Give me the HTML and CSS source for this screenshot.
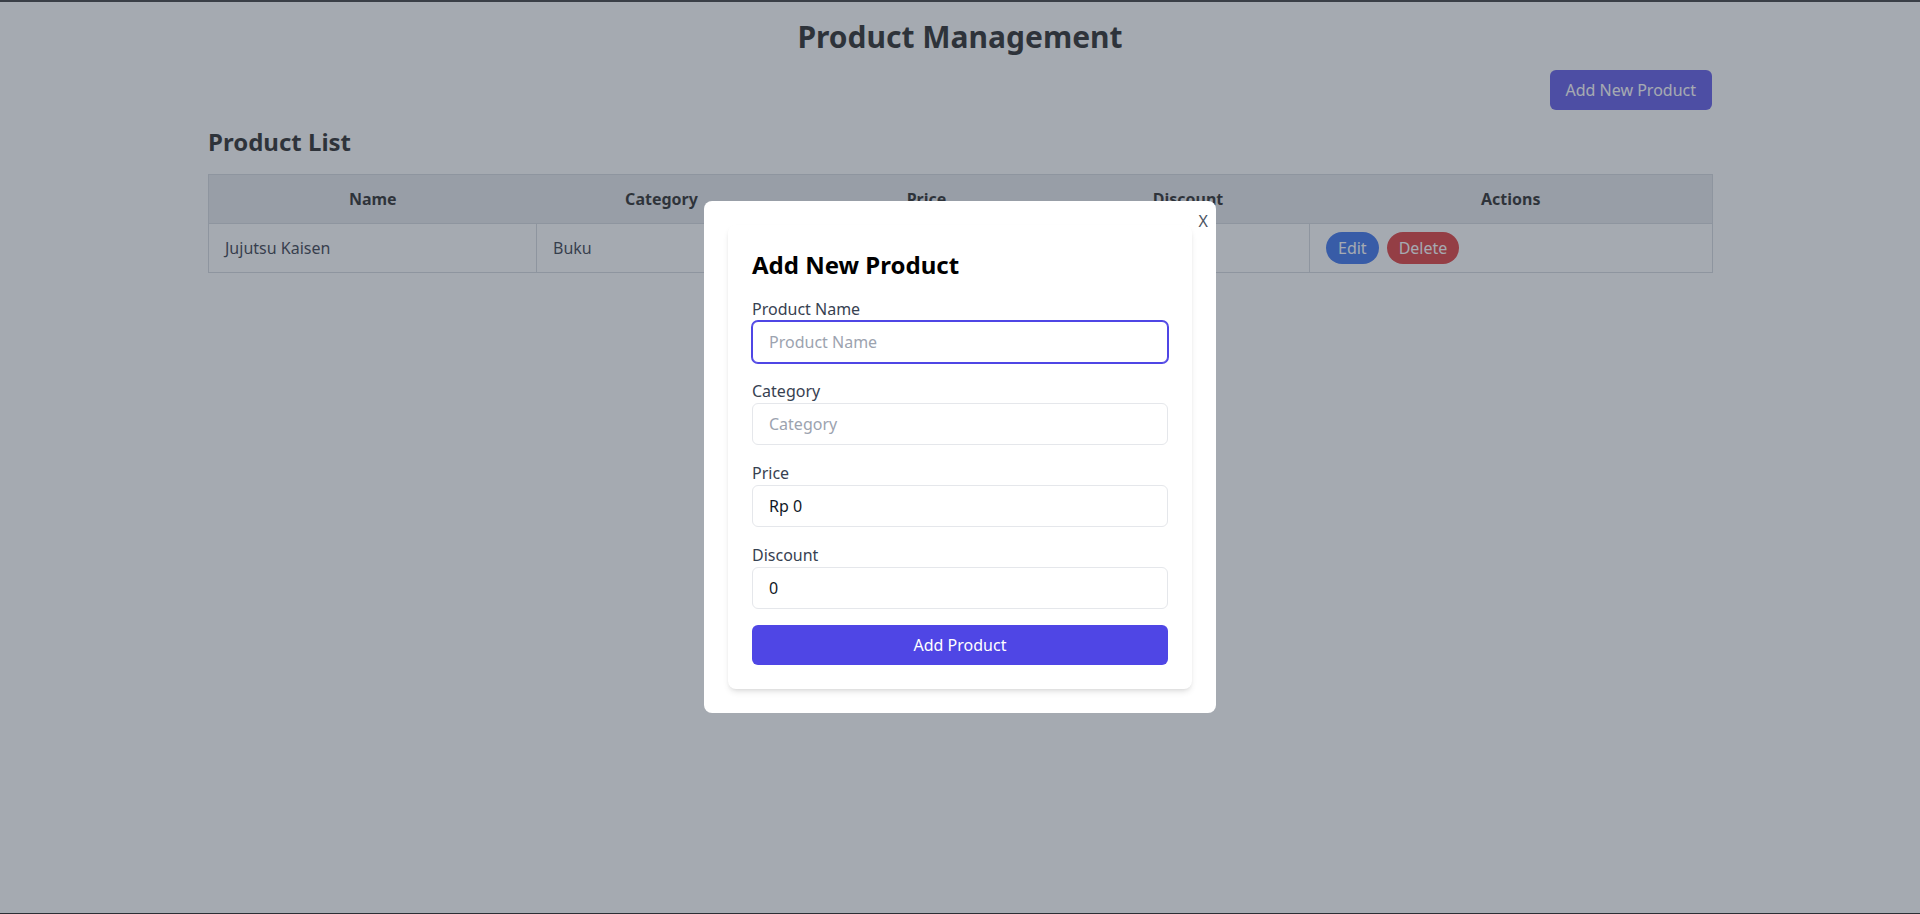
FILE: index.html
```html
<!DOCTYPE html>
<html lang="en">
<head>
<meta charset="utf-8">
<title>Product Management</title>
<link rel="stylesheet" href="styles.css">
</head>
<body>
<div class="container">
  <h1 class="page-title">Product Management</h1>
  <div class="toolbar">
    <button class="btn-primary" type="button">Add New Product</button>
  </div>
  <h2 class="section-title">Product List</h2>
  <table class="product-table">
    <colgroup>
      <col class="col-name">
      <col class="col-category">
      <col class="col-price">
      <col class="col-discount">
      <col class="col-actions">
    </colgroup>
    <thead>
      <tr>
        <th>Name</th>
        <th>Category</th>
        <th>Price</th>
        <th>Discount</th>
        <th>Actions</th>
      </tr>
    </thead>
    <tbody>
      <tr>
        <td>Jujutsu Kaisen</td>
        <td>Buku</td>
        <td>Rp 50.000</td>
        <td>10%</td>
        <td>
          <div class="actions">
            <button class="pill pill-edit" type="button">Edit</button>
            <button class="pill pill-delete" type="button">Delete</button>
          </div>
        </td>
      </tr>
    </tbody>
  </table>
</div>

<div class="overlay">
  <div class="modal">
    <button class="close" type="button">X</button>
    <div class="card">
      <h2 class="card-title">Add New Product</h2>
      <form class="form">
        <div class="field">
          <label class="label" for="name">Product Name</label>
          <input class="input input-focus" id="name" type="text" placeholder="Product Name">
        </div>
        <div class="field">
          <label class="label" for="category">Category</label>
          <input class="input" id="category" type="text" placeholder="Category">
        </div>
        <div class="field">
          <label class="label" for="price">Price</label>
          <input class="input" id="price" type="text" value="Rp 0">
        </div>
        <div class="field">
          <label class="label" for="discount">Discount</label>
          <input class="input" id="discount" type="text" value="0">
        </div>
        <button class="submit" type="button">Add Product</button>
      </form>
    </div>
  </div>
</div>
</body>
</html>
```
FILE: styles.css
```css
* { box-sizing: border-box; }

html, body { height: 100%; }

body {
  margin: 0;
  background: #ffffff;
  color: #1f2937;
  font-family: "Noto Sans", "Open Sans", sans-serif;
  font-size: 16px;
  line-height: 24px;
  border-top: 2px solid #29282a;
}

.container {
  max-width: 1536px;
  margin: 0 auto;
  padding: 16px 16px 0;
}

.page-title {
  margin: 0 0 16px;
  padding-top: 1px;
  height: 36px;
  font-size: 30px;
  line-height: 36px;
  font-weight: 700;
  text-align: center;
  color: #111111;
}

.toolbar {
  display: flex;
  justify-content: flex-end;
  margin-bottom: 16px;
}

.btn-primary {
  font: inherit;
  border: none;
  background: #4f46e5;
  color: #ffffff;
  padding: 8px 16px;
  border-radius: 6px;
  line-height: 24px;
}

.section-title {
  margin: 0 0 16px;
  font-size: 24px;
  line-height: 32px;
  font-weight: 700;
  color: #111111;
}

.product-table {
  width: 100%;
  table-layout: fixed;
  border-collapse: collapse;
  border: 1px solid #d1d5db;
}

.col-name { width: 328px; }
.col-category { width: 250px; }
.col-price { width: 280px; }
.col-discount { width: 243px; }
.col-actions { width: 403px; }

.product-table th {
  background: #e5e7eb;
  border: none;
  border-bottom: 1px solid #d1d5db;
  padding: 12px 16px;
  font-weight: 700;
  text-align: center;
  color: #111111;
}

.product-table td {
  border: 1px solid #d1d5db;
  padding: 8px 16px;
  text-align: left;
  color: #1f2937;
  height: 49px;
}

.actions {
  display: flex;
  gap: 8px;
}

.pill {
  font: inherit;
  border: none;
  color: #ffffff;
  padding: 4px 12px;
  border-radius: 9999px;
  line-height: 24px;
}

.pill-edit { background: #2563eb; }
.pill-delete { background: #dc2626; }

.overlay {
  position: fixed;
  inset: 0;
  background: rgba(75, 85, 99, 0.5);
  display: flex;
  align-items: center;
  justify-content: center;
  border-bottom: 1px solid #2b2f35;
}

.modal {
  position: relative;
  width: 512px;
  background: #ffffff;
  border-radius: 8px;
  padding: 24px;
}

.close {
  position: absolute;
  top: 8px;
  right: 8px;
  font: inherit;
  line-height: 24px;
  background: none;
  border: none;
  padding: 0;
  color: #4b5563;
}

.card {
  background: #ffffff;
  border-radius: 8px;
  padding: 24px;
  box-shadow: 0 4px 6px -1px rgba(0, 0, 0, 0.1), 0 2px 4px -2px rgba(0, 0, 0, 0.1);
}

.card-title {
  margin: 0 0 16px;
  font-size: 24px;
  line-height: 32px;
  font-weight: 700;
  color: #000000;
}

.form { margin: 0; }

.field { margin-bottom: 16px; }

.label {
  display: block;
  color: #374151;
  font-size: 16px;
  line-height: 24px;
}

.input {
  display: block;
  width: 100%;
  font: inherit;
  line-height: 24px;
  padding: 8px 16px;
  border: 1px solid #e5e7eb;
  border-radius: 6px;
  color: #111827;
  background: #ffffff;
  outline: none;
}

.input::placeholder { color: #9ca3af; }

.input-focus {
  border-color: #4f46e5;
  box-shadow: 0 0 0 1px #4f46e5;
}

.submit {
  display: block;
  width: 100%;
  font: inherit;
  line-height: 24px;
  padding: 8px 16px;
  border: none;
  border-radius: 6px;
  background: #4f46e5;
  color: #ffffff;
}
```
